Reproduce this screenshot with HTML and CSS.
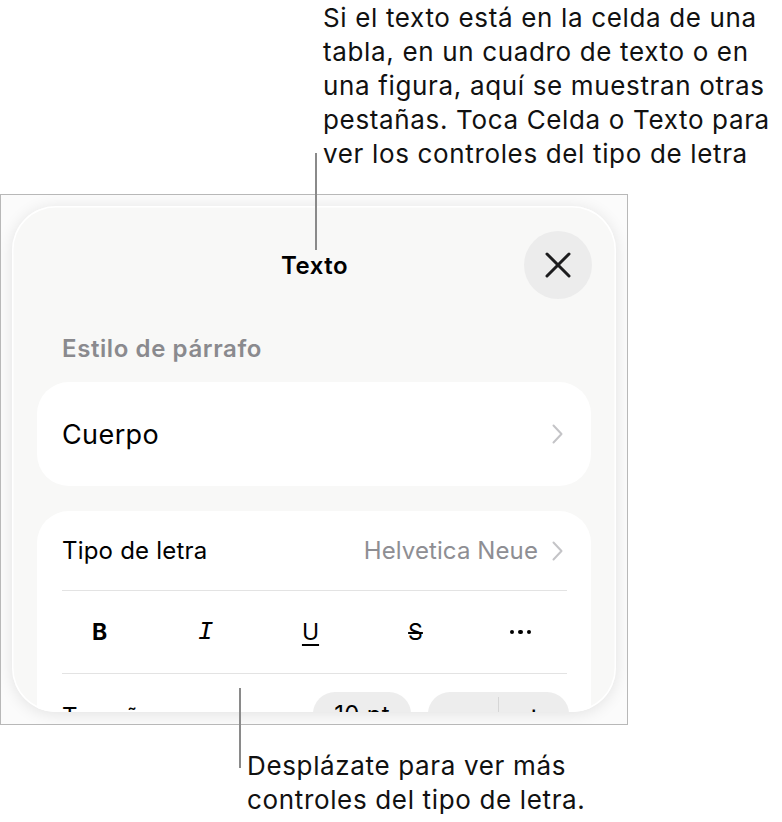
FILE: index.html
```html
<!DOCTYPE html>
<html lang="es">
<head>
    <meta charset="UTF-8">
    <meta name="viewport" content="width=device-width, initial-scale=1.0">
    <title>Texto</title>
    <link rel="stylesheet" href="styles.css">
</head>
<body>
    <div class="page">
        <p class="callout callout-top">Si el texto está en la celda de una tabla, en un cuadro de texto o en una figura, aquí se muestran otras pestañas. Toca Celda o Texto para ver los controles del tipo de letra</p>

        <div class="frame">
            <div class="sheet">
                <div class="sheet-header">
                    <span></span>
                    <h1 class="sheet-title">Texto</h1>
                    <button class="close-btn" aria-label="Cerrar">
                        <svg width="28" height="28" viewBox="0 0 28 28">
                            <path d="M3 3 L25 25 M25 3 L3 25" stroke="#1c1c1e" stroke-width="3" stroke-linecap="round" fill="none"/>
                        </svg>
                    </button>
                </div>

                <div class="section-label">Estilo de párrafo</div>
                <div class="card">
                    <div class="row row-big">
                        <span>Cuerpo</span>
                        <svg class="chevron" width="11" height="20" viewBox="0 0 11 20"><path d="M1.5 1.5 L9.5 10 L1.5 18.5" /></svg>
                    </div>
                </div>

                <div class="card card-font">
                    <div class="row row-font">
                        <span>Tipo de letra</span>
                        <span class="row-value">Helvetica Neue
                            <svg class="chevron" width="11" height="20" viewBox="0 0 11 20"><path d="M1.5 1.5 L9.5 10 L1.5 18.5" /></svg>
                        </span>
                    </div>
                    <div class="format-row">
                        <span class="fmt fmt-b">B</span>
                        <span class="fmt fmt-i">I</span>
                        <span class="fmt fmt-u">U</span>
                        <span class="fmt fmt-s">S</span>
                        <span class="fmt fmt-more"><i></i><i></i><i></i></span>
                    </div>
                    <div class="row row-size">
                        <span>Tamaño</span>
                        <div class="size-controls">
                            <span class="pill pill-value">10 pt</span>
                            <span class="pill pill-stepper"><span>−</span><span class="step-plus">+</span></span>
                        </div>
                    </div>
                </div>
            </div>
        </div>

        <p class="callout callout-bottom">Desplázate para ver más controles del tipo de letra.</p>

        <div class="leader leader-top"></div>
        <div class="leader leader-bottom"></div>
    </div>
</body>
</html>
```

FILE: styles.css
```css
body {
    margin: 0;
    padding: 0;
    background: #fff;
    font-family: Inter, "Noto Sans", sans-serif;
    color: #000;
}
.page {
    position: relative;
    width: 782px;
    height: 822px;
}
.callout {
    margin: 0;
    font-size: 26px;
    line-height: 34px;
    letter-spacing: 0.65px;
    color: #111;
}
.callout-top {
    width: 459px;
    margin-left: 323px;
    padding-top: 1px;
}
.callout-bottom {
    width: 390px;
    margin-left: 247px;
    margin-top: 24px;
}
.leader {
    position: absolute;
    width: 2px;
    background: #8a8a8a;
}
.leader-top {
    left: 315px;
    top: 153px;
    height: 97px;
}
.leader-bottom {
    left: 239px;
    top: 688px;
    height: 80px;
}

/* screenshot frame */
.frame {
    box-sizing: border-box;
    width: 628px;
    height: 531px;
    margin-top: 23px;
    padding: 11px 0 0 11px;
    border: 1px solid #b8b8b8;
    background: #fbfbfb;
    overflow: hidden;
}
.sheet {
    box-sizing: border-box;
    width: 604px;
    height: 506px;
    padding: 0 25px;
    background: #f8f8f7;
    border-radius: 44px;
    box-shadow: inset 0 0 0 1.5px #fff, 0 2px 16px rgba(0, 0, 0, 0.1);
    overflow: hidden;
}
.sheet-header {
    display: grid;
    grid-template-columns: 1fr auto 1fr;
    align-items: center;
    padding-top: 25px;
    margin-right: -1px;
}
.sheet-title {
    margin: 0;
    font-size: 24px;
    font-weight: 600;
    letter-spacing: 0.5px;
}
.close-btn {
    justify-self: end;
    display: flex;
    align-items: center;
    justify-content: center;
    width: 68px;
    height: 68px;
    padding: 0;
    border: none;
    border-radius: 50%;
    background: #ececec;
}
.section-label {
    margin: 36px 0 0 25px;
    font-size: 24px;
    line-height: 28px;
    font-weight: 600;
    color: #8a8a8e;
    letter-spacing: 0.6px;
}
.card {
    margin-top: 19px;
    background: #fff;
    border-radius: 32px;
}
.card-font {
    margin-top: 25px;
    border-radius: 32px 32px 0 0;
}
.row {
    display: flex;
    align-items: center;
    justify-content: space-between;
    padding: 0 28px 0 25px;
}
.row-big {
    height: 104px;
    font-size: 27px;
    letter-spacing: 0.4px;
}
.row-font {
    height: 79px;
    font-size: 24px;
    letter-spacing: 0.2px;
}
.row-value {
    display: flex;
    align-items: center;
    gap: 14px;
    color: #8e8e93;
    letter-spacing: 0.1px;
}
.chevron path {
    fill: none;
    stroke: #c4c4c7;
    stroke-width: 2;
    stroke-linecap: round;
    stroke-linejoin: round;
}
.format-row {
    display: grid;
    grid-template-columns: repeat(5, 1fr);
    align-items: center;
    height: 82px;
    margin: 0 24px 0 25px;
    border-top: 1px solid #e3e3e3;
    border-bottom: 1px solid #e3e3e3;
}
.fmt {
    justify-self: center;
    font-size: 23px;
    line-height: 1;
}
.format-row .fmt:nth-child(1) { margin-left: -26px; }
.format-row .fmt:nth-child(2) { margin-left: -16px; }
.format-row .fmt:nth-child(3) { margin-left: -8px; }
.format-row .fmt:nth-child(4) { margin-left: 0; }
.format-row .fmt:nth-child(5) { margin-left: 8px; }
.fmt-b {
    font-weight: 700;
}
.fmt-i {
    font-family: "Liberation Mono", monospace;
    font-style: italic;
    font-size: 26px;
}
.fmt-u {
    text-decoration: underline;
    text-decoration-thickness: 2px;
    text-underline-offset: 4px;
}
.fmt-s {
    text-decoration: line-through;
    text-decoration-thickness: 1.5px;
}
.fmt-more {
    display: flex;
    gap: 4px;
}
.fmt-more i {
    width: 4.5px;
    height: 4.5px;
    border-radius: 50%;
    background: #000;
}
.row-size {
    height: 80px;
    align-items: flex-start;
    padding: 18px 22px 0 25px;
    font-size: 24px;
    letter-spacing: 0.3px;
}
.row-size > span {
    margin-top: 10px;
}
.size-controls {
    display: flex;
    gap: 17px;
}
.pill {
    display: flex;
    align-items: center;
    justify-content: center;
    height: 44px;
    border-radius: 22px;
    background: #ededed;
    font-size: 24px;
}
.pill-value {
    width: 98px;
}
.pill-stepper {
    width: 141px;
}
.pill-stepper span {
    flex: 1;
    text-align: center;
}
.step-plus {
    border-left: 1px solid #d6d6d6;
    font-size: 28px;
}
```
